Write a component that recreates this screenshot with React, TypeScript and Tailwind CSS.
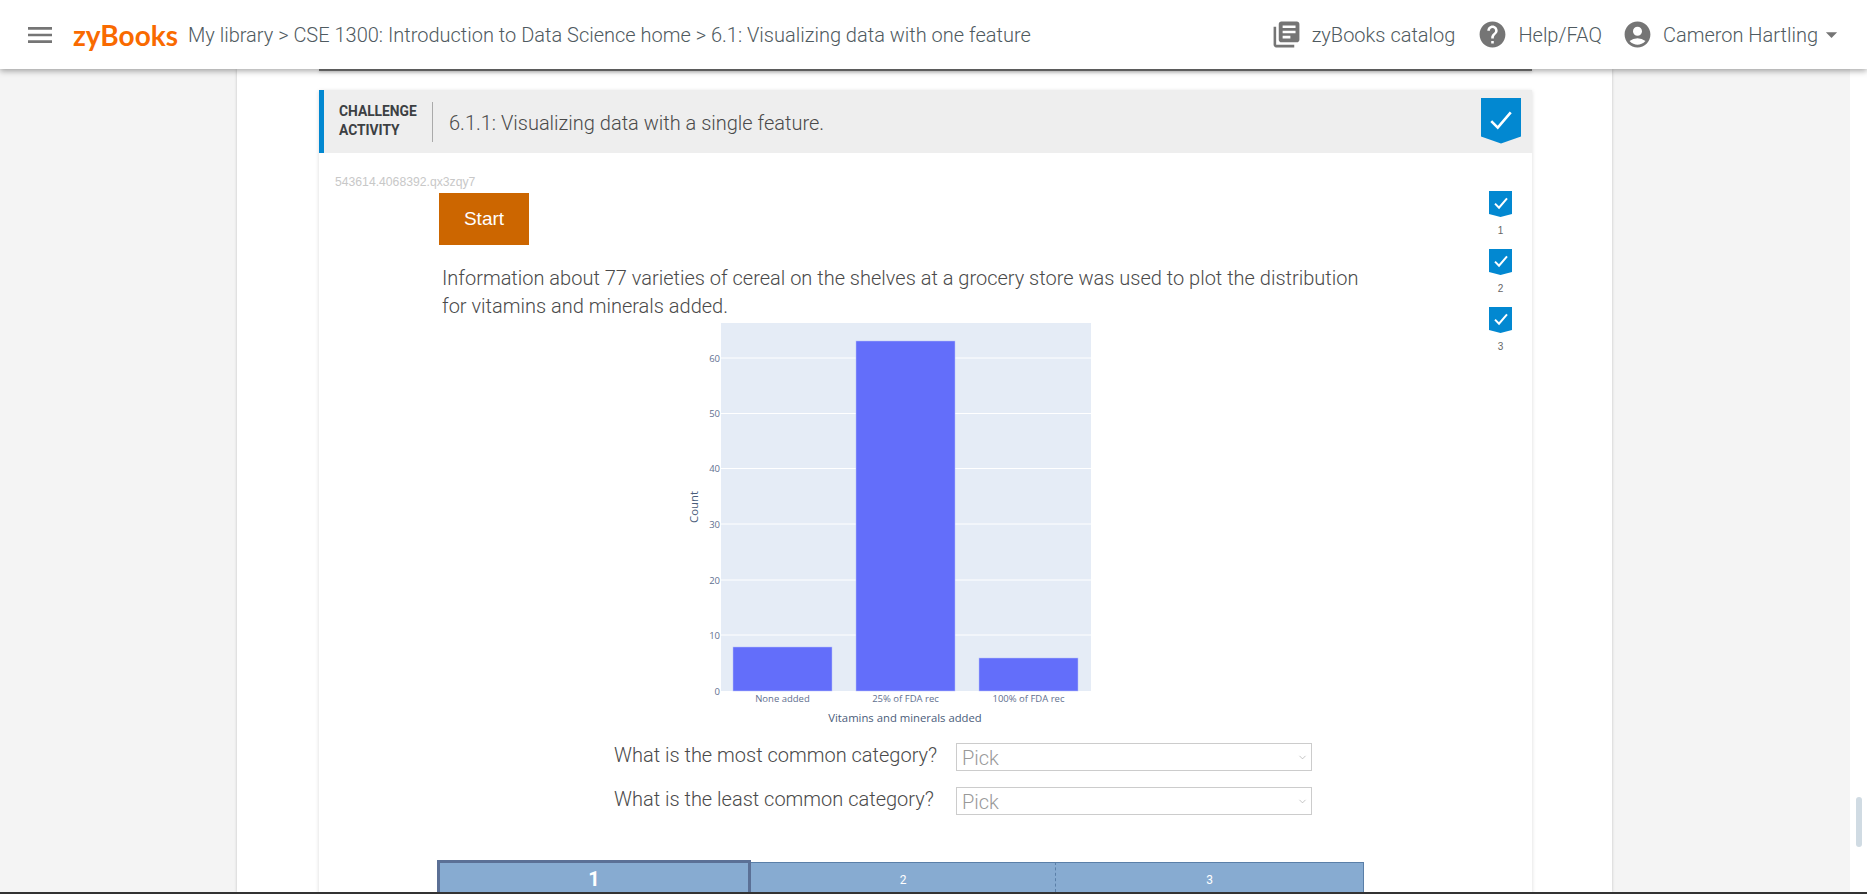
import { ChevronDown } from "lucide-react"
import { MdAccountCircle, MdArrowDropDown, MdHelp, MdLibraryBooks, MdMenu } from "react-icons/md"

const roboto = "font-['Roboto','Liberation_Sans',sans-serif]"

const grid = [
  { label: "60", y: 38 },
  { label: "50", y: 93.5 },
  { label: "40", y: 148.5 },
  { label: "30", y: 204 },
  { label: "20", y: 260 },
  { label: "10", y: 315 },
]

const bars = [
  { x: 63, w: 99, name: "None added", h: 327 },
  { x: 186, w: 99, name: "25% of FDA rec", h: 21 },
  { x: 309, w: 99, name: "100% of FDA rec", h: 338 },
]

function Check({ size, weight = 2.4 }: { size: number; weight?: number }) {
  return (
    <svg width={size} height={size} viewBox="0 0 24 24" fill="none" stroke="white" strokeWidth={weight}>
      <path d="M3 13l6 6L21 5" />
    </svg>
  )
}

function Chart() {
  return (
    <svg width="440" height="423" viewBox="0 0 440 423" className="block font-['Open_Sans',sans-serif]">
      <rect x="51" y="3" width="370" height="368" fill="#e5ecf6" />
      {grid.map((g) => (
        <g key={g.label}>
          <line x1="51" x2="421" y1={g.y} y2={g.y} stroke="white" />
          <text x="50" y={g.y + 3.5} textAnchor="end" fontSize="9.5" fill="#5f7090">
            {g.label}
          </text>
        </g>
      ))}
      <text x="50" y="374.5" textAnchor="end" fontSize="9.5" fill="#5f7090">
        0
      </text>
      {bars.map((b) => (
        <g key={b.name}>
          <rect x={b.x} y={b.h} width={b.w} height={371 - b.h} fill="#636efa" stroke="#b9c0fb" strokeWidth="0.5" />
          <text x={b.x + b.w / 2} y="382" textAnchor="middle" fontSize="9.5" fill="#5f7090">
            {b.name}
          </text>
        </g>
      ))}
      <text x="235" y="402" textAnchor="middle" fontSize="11.3" fill="#4a5c7a">
        Vitamins and minerals added
      </text>
      <text transform="translate(28 187) rotate(-90)" textAnchor="middle" fontSize="11.3" fill="#4a5c7a">
        Count
      </text>
    </svg>
  )
}

function Question({ text }: { text: string }) {
  return (
    <div className="flex items-center h-7">
      <div className="w-[637px] pl-[295px] -mt-[4px] text-[20px] leading-7 font-light whitespace-nowrap text-[#4a4a4a]">{text}</div>
      <div className="w-[356px] h-7 border border-[#cccccc] flex items-center justify-between pl-[5px] pr-[3px]">
        <span className="text-[20px] font-light text-[#999999] mt-0.5">Pick</span>
        <ChevronDown size={11} className="text-[#aaaaaa]" strokeWidth={1.5} />
      </div>
    </div>
  )
}

export default function App() {
  return (
    <div className={`h-[894px] w-full overflow-hidden flex flex-col border-b-2 border-[#333333] bg-white ${roboto}`}>
      <header className="relative z-10 flex-none h-[69px] bg-white shadow-[0_2px_6px_rgba(0,0,0,0.35)] flex items-center justify-between pl-[24px] pr-[29px] text-[20px] font-light text-[#4f5a60]">
        <div className="flex items-center">
          <MdMenu size={32} className="text-[#757575]" />
          <span className="ml-[17px] mr-[9px] w-[106px] text-[28px] font-bold leading-none text-[#f96a00] font-['Lato',sans-serif]">zyBooks</span>
          <span className="whitespace-nowrap">My library &gt; CSE 1300: Introduction to Data Science home &gt; 6.1: Visualizing data with one feature</span>
        </div>
        <div className="flex items-center">
          <MdLibraryBooks size={31} className="text-[#757575]" />
          <span className="ml-[10px]">zyBooks catalog</span>
          <MdHelp size={31} className="ml-[22px] text-[#757575]" />
          <span className="ml-[10px]">Help/FAQ</span>
          <MdAccountCircle size={31} className="ml-[20px] text-[#757575]" />
          <span className="ml-[10px]">Cameron Hartling</span>
          <MdArrowDropDown size={27} className="-mr-[7px] text-[#757575]" />
        </div>
      </header>

      <div className="flex-1 min-h-0 flex">
        <main className="w-[1850px] bg-[#f4f4f4] pl-[237px] overflow-hidden">
          <div className="w-[1375px] h-full bg-white shadow-[0_0_3px_rgba(0,0,0,0.2)] pl-[82px]">
            <div className="w-[1213px] h-[2px] bg-[#777777] shadow-[0_1px_3px_rgba(0,0,0,0.2)]" />
            <section className="mt-[19px] w-[1213px] h-[900px] shadow-[0_1px_4px_rgba(0,0,0,0.15)]">
              <div className="h-[63px] bg-[#eeeeee] border-l-[5px] border-[#0288d1] flex items-center pl-[15px] pr-[11px]">
                <div className="w-[94px] h-10 border-r border-[#aaaaaa] text-[13.8px] leading-[19px] font-bold text-[#3c4043]">
                  CHALLENGE
                  <br />
                  ACTIVITY
                </div>
                <h2 className="ml-[16px] text-[20px] font-light text-[#4a4a4a] flex-1 mt-0.5">6.1.1: Visualizing data with a single feature.</h2>
                <div className="w-10 h-[46px] mb-[2px] bg-[#0288d1] flex items-start justify-center pt-[9px] [clip-path:polygon(0_0,100%_0,100%_85%,50%_100%,0_85%)]">
                  <Check size={26} />
                </div>
              </div>

              <div className="flex">
                <div className="flex-1 pt-[22px]">
                  <div className="pl-[16px] h-[18px] text-[12.2px] leading-[14px] text-[#c8c8c8] font-['Liberation_Sans',sans-serif]">543614.4068392.qx3zqy7</div>
                  <button className="ml-[120px] w-[90px] h-[52px] bg-[#cc6600] text-white text-[19px] font-['Liberation_Sans',sans-serif]">Start</button>
                  <p className="ml-[123px] mt-[19px] w-[940px] text-[20px] leading-7 font-light text-[#4a4a4a]">
                    Information about 77 varieties of cereal on the shelves at a grocery store was used to plot the distribution for vitamins and minerals added.
                  </p>
                  <div className="ml-[351px]">
                    <Chart />
                  </div>
                  <div className="flex flex-col gap-4">
                    <Question text="What is the most common category?" />
                    <Question text="What is the least common category?" />
                  </div>
                  <div className="mt-[45px] ml-[118px] flex items-end h-[32px] text-white">
                    <div className="w-[314px] h-[32px] pt-[3px] bg-[#87abd1] border-[3px] border-b-0 border-[#5b7096] flex items-center justify-center font-bold text-[20px]">1</div>
                    <div className="w-[305px] h-[30px] pt-[4px] bg-[#87abd1] border-t border-[#5a7fa8] border-r border-r-[#5a7fa8] [border-right-style:dashed] flex items-center justify-center text-[12px]">2</div>
                    <div className="w-[308px] h-[30px] pt-[4px] bg-[#87abd1] border-t border-r border-[#5a7fa8] flex items-center justify-center text-[12px]">3</div>
                  </div>
                </div>
                <div className="w-[23px] mr-[20px] pt-[38px] flex flex-col gap-[8px]">
                  {[1, 2, 3].map((n) => (
                    <div key={n} className="flex flex-col items-center">
                      <div className="w-[23px] h-[26px] bg-[#0288d1] flex justify-center pt-[4px] [clip-path:polygon(0_0,100%_0,100%_88%,50%_100%,0_88%)]">
                        <Check size={16} weight={3} />
                      </div>
                      <span className="h-[17px] mt-[7px] text-[10px] leading-[14px] text-[#666666] font-['Liberation_Sans',sans-serif]">{n}</span>
                    </div>
                  ))}
                </div>
              </div>
            </section>
          </div>
        </main>
        <div className="w-[17px] pl-[6px] pt-[728px]">
          <div className="w-[6px] h-[50px] rounded-[3px] bg-[#d0dbe3]" />
        </div>
      </div>
    </div>
  )
}
